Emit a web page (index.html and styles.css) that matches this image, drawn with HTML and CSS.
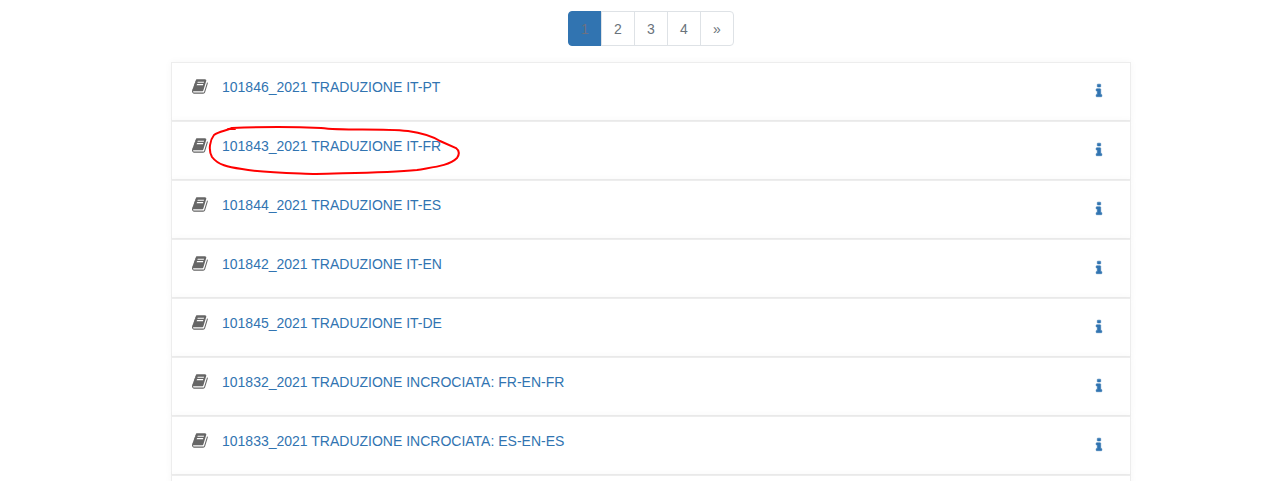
FILE: index.html
```html
<!DOCTYPE html>
<html lang="it">
<head>
  <meta charset="utf-8">
  <title>Corsi</title>
  <link rel="stylesheet" href="styles.css">
</head>
<body>

<svg class="sprite" aria-hidden="true">
  <symbol id="book" viewBox="0 0 1792 1792">
    <path d="M1639 478q40 57 18 129l-275 906q-19 64-76.5 107.5t-122.5 43.5h-923q-77 0-148.5-53.5t-99.5-131.5q-24-67-2-127 0-4 3-27t4-37q1-8-3-21.5t-3-19.5q2-11 8-21t16.5-23.5 16.5-23.5q23-38 45-91.5t30-91.5q3-10 .5-30t-.5-28q3-11 17-28t17-23q21-36 42-92t25-90q1-9-2.5-32t.5-28q4-13 22-30.5t22-22.5q19-26 42.5-84.5t27.5-96.5q1-8-3-25.5t-2-26.5q2-8 9-18t18-23 17-21q8-12 16.5-30.5t15-35 16-36 19.5-32 26.5-23.5 36-11.5 47.5 5.5l-1 3q38-9 51-9h761q74 0 114 56t18 130l-274 906q-36 119-71.5 153.5t-128.5 34.5h-869q-27 0-38 15-11 16-1 43 24 70 144 70h923q29 0 56-15.5t35-41.5l300-987q7-22 5-57 38 15 59 43zm-1064 2q-4 13 2 22.5t20 9.5h608q13 0 25.5-9.5t16.5-22.5l21-64q4-13-2-22.5t-20-9.5h-608q-13 0-25.5 9.5t-16.5 22.5zm-83 256q-4 13 2 22.5t20 9.5h608q13 0 25.5-9.5t16.5-22.5l21-64q4-13-2-22.5t-20-9.5h-608q-13 0-25.5 9.5t-16.5 22.5z"/>
  </symbol>
  <symbol id="info" viewBox="0 0 1792 1792">
    <path d="M1216 1344v128q0 26-19 45t-45 19h-512q-26 0-45-19t-19-45v-128q0-26 19-45t45-19h64v-384h-64q-26 0-45-19t-19-45v-128q0-26 19-45t45-19h384q26 0 45 19t19 45v576h64q26 0 45 19t19 45zm-128-1152v192q0 26-19 45t-45 19h-256q-26 0-45-19t-19-45v-192q0-26 19-45t45-19h256q26 0 45 19t19 45z"/>
  </symbol>
</svg>

<nav aria-label="Pagina">
  <ul class="pagination">
    <li><a class="page active" href="#" aria-current="page">1</a></li>
    <li><a class="page" href="#">2</a></li>
    <li><a class="page" href="#">3</a></li>
    <li><a class="page" href="#">4</a></li>
    <li><a class="page" href="#" aria-label="Successivo">»</a></li>
  </ul>
</nav>

<main class="courses">
  <div class="course">
    <svg class="book"><use href="#book"/></svg>
    <a class="name" href="#">101846_2021 TRADUZIONE IT-PT</a>
    <a class="info" href="#" aria-label="Informazioni"><svg><use href="#info"/></svg></a>
  </div>
  <div class="course">
    <svg class="book"><use href="#book"/></svg>
    <a class="name" href="#">101843_2021 TRADUZIONE IT-FR</a>
    <a class="info" href="#" aria-label="Informazioni"><svg><use href="#info"/></svg></a>
    <!-- hand-drawn ring round the course name -->
    <svg class="ring" viewBox="0 0 256 52" aria-hidden="true">
      <path d="M20 4H27M24 3C50 2 90 2 113 3C137 6 170 3 200 6C214 8 224 11 232 16L248 23C252 26 251 30 249 33C241 41 225 42 209 45C178 48 138 48 108 49C80 48 53 48 34 44C20 42 10 40 4 32C0 25 2 15 6 10C11 6 18 6 24 3"/>
    </svg>
  </div>
  <div class="course">
    <svg class="book"><use href="#book"/></svg>
    <a class="name" href="#">101844_2021 TRADUZIONE IT-ES</a>
    <a class="info" href="#" aria-label="Informazioni"><svg><use href="#info"/></svg></a>
  </div>
  <div class="course">
    <svg class="book"><use href="#book"/></svg>
    <a class="name" href="#">101842_2021 TRADUZIONE IT-EN</a>
    <a class="info" href="#" aria-label="Informazioni"><svg><use href="#info"/></svg></a>
  </div>
  <div class="course">
    <svg class="book"><use href="#book"/></svg>
    <a class="name" href="#">101845_2021 TRADUZIONE IT-DE</a>
    <a class="info" href="#" aria-label="Informazioni"><svg><use href="#info"/></svg></a>
  </div>
  <div class="course">
    <svg class="book"><use href="#book"/></svg>
    <a class="name" href="#">101832_2021 TRADUZIONE INCROCIATA: FR-EN-FR</a>
    <a class="info" href="#" aria-label="Informazioni"><svg><use href="#info"/></svg></a>
  </div>
  <div class="course">
    <svg class="book"><use href="#book"/></svg>
    <a class="name" href="#">101833_2021 TRADUZIONE INCROCIATA: ES-EN-ES</a>
    <a class="info" href="#" aria-label="Informazioni"><svg><use href="#info"/></svg></a>
  </div>
  <div class="course"></div>
</main>

</body>
</html>
```

FILE: styles.css
```css
* {
  box-sizing: border-box;
}
html {
  height: 100%;
  overflow: hidden;
}
body {
  margin: 0;
  padding: 11px 0 0 20px;
  font-family: "Liberation Sans", Arial, sans-serif;
  font-size: 14px;
  line-height: 20px;
  background-color: #fff;
}
a {
  color: #3174b1;
  text-decoration: none;
}
.sprite {
  display: none;
}
.pagination {
  display: flex;
  justify-content: center;
  list-style: none;
  margin: 0 0 16px;
  padding: 0;
}
.pagination li + li {
  margin-left: -1px;
}
.page {
  display: block;
  width: 34px;
  height: 35px;
  line-height: 35px;
  text-align: center;
  color: #6a737b;
  border: 1px solid #dee2e6;
}
.pagination li:first-child .page {
  border-radius: 4px 0 0 4px;
}
.pagination li:last-child .page {
  border-radius: 0 4px 4px 0;
}
.page.active {
  color: #6e7180;
  background-color: #3174b1;
  border-color: #3174b1;
}
.courses {
  max-width: 960px;
  margin: 0 auto;
}
.course {
  display: flex;
  align-items: flex-start;
  position: relative;
  height: 59px;
  padding: 14px 23px 0 20px;
  border: 1px solid #ededed;
  box-shadow: 0 0 8px rgba(0, 0, 0, 0.04);
  background-color: #fff;
}
.book {
  width: 17px;
  height: 17px;
  margin: 1px 13px 0 0;
  fill: #666;
}
.info {
  margin-left: auto;
  padding-top: 6px;
}
.info svg {
  display: block;
  width: 16px;
  height: 16px;
  fill: #3174b1;
  stroke: #3174b1;
  stroke-width: 60px;
}
.ring {
  position: absolute;
  left: 36px;
  top: 3px;
  width: 256px;
  height: 52px;
  fill: none;
  stroke: #f00;
  stroke-width: 2;
  stroke-linecap: round;
  pointer-events: none;
}
```
